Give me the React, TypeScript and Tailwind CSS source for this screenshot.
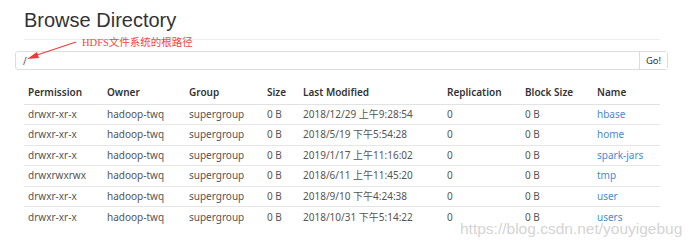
import React from 'react';

const rows = [
  { perm: 'drwxr-xr-x', date: '2018/12/29 上午9:28:54', name: 'hbase' },
  { perm: 'drwxr-xr-x', date: '2018/5/19 下午5:54:28', name: 'home' },
  { perm: 'drwxr-xr-x', date: '2019/1/17 上午11:16:02', name: 'spark-jars' },
  { perm: 'drwxrwxrwx', date: '2018/6/11 上午11:45:20', name: 'tmp' },
  { perm: 'drwxr-xr-x', date: '2018/9/10 下午4:24:38', name: 'user' },
  { perm: 'drwxr-xr-x', date: '2018/10/31 下午5:14:22', name: 'users' },
];

const font = { fontFamily: '"Noto Sans", "Noto Sans CJK SC", sans-serif' };

export default function App() {
  return (
    <div className="relative w-[697px] h-[241px] bg-white overflow-hidden text-[#333]" style={font}>
      <div className="pl-[24px] pr-[37px] pt-[6px]">
        <h1 className="text-[20px] leading-[28px] text-[#333] font-['Liberation_Sans',sans-serif]">Browse Directory</h1>
        <div className="mt-[5px] border-t border-[#eee]" />
      </div>

      {/* annotation */}
      <span className="absolute left-[82px] top-[35px] text-[10.5px] text-[#f04545] font-['Liberation_Serif','Noto_Sans_CJK_SC',serif]">
        HDFS文件系统的根路径
      </span>
      <svg className="absolute left-0 top-0" width="100" height="70">
        <line x1="76" y1="42" x2="34" y2="56" stroke="#ee3a3a" strokeWidth="1.2" />
        <polygon points="27,59 37,52 39,58" fill="#ee3a3a" />
      </svg>

      {/* path input */}
      <div className="ml-[15px] mt-[11px] w-[653px] h-[19px] flex border border-[#ddd] rounded-[3px]">
        <div className="flex-1 pl-[7px] text-[10px] leading-[18px] text-[#555]">/</div>
        <div className="w-[28px] border-l border-[#ddd] bg-white text-[9.5px] leading-[18px] text-center text-[#333]">Go!</div>
      </div>

      {/* listing */}
      <table className="ml-[24px] mt-[12px] w-[636px] text-[10px] border-collapse">
        <thead>
          <tr className="h-[22px] border-b border-[#e2e2e2] text-left text-[#333]">
            <th className="pl-[4px] w-[83px] font-semibold">Permission</th>
            <th className="w-[82px] font-semibold">Owner</th>
            <th className="w-[78px] font-semibold">Group</th>
            <th className="w-[36px] font-semibold">Size</th>
            <th className="w-[144px] font-semibold">Last Modified</th>
            <th className="w-[78px] font-semibold">Replication</th>
            <th className="w-[72px] font-semibold">Block Size</th>
            <th className="font-semibold">Name</th>
          </tr>
        </thead>
        <tbody>
          {rows.map((r, i) => (
            <tr key={r.name} className={`h-[20.5px] text-[#555] ${i > 0 ? 'border-t border-[#e6e6e6]' : ''}`}>
              <td className="pl-[4px]">{r.perm}</td>
              <td>hadoop-twq</td>
              <td>supergroup</td>
              <td>0 B</td>
              <td>{r.date}</td>
              <td>0</td>
              <td>0 B</td>
              <td className="text-[#4a8ad0]">{r.name}</td>
            </tr>
          ))}
        </tbody>
      </table>

      {/* watermark */}
      <span className="absolute left-[460px] top-[217px] text-[15.5px] text-[#d4d4d4] font-['Liberation_Sans',sans-serif]">
        https://blog.csdn.net/youyigebug
      </span>
    </div>
  );
}
